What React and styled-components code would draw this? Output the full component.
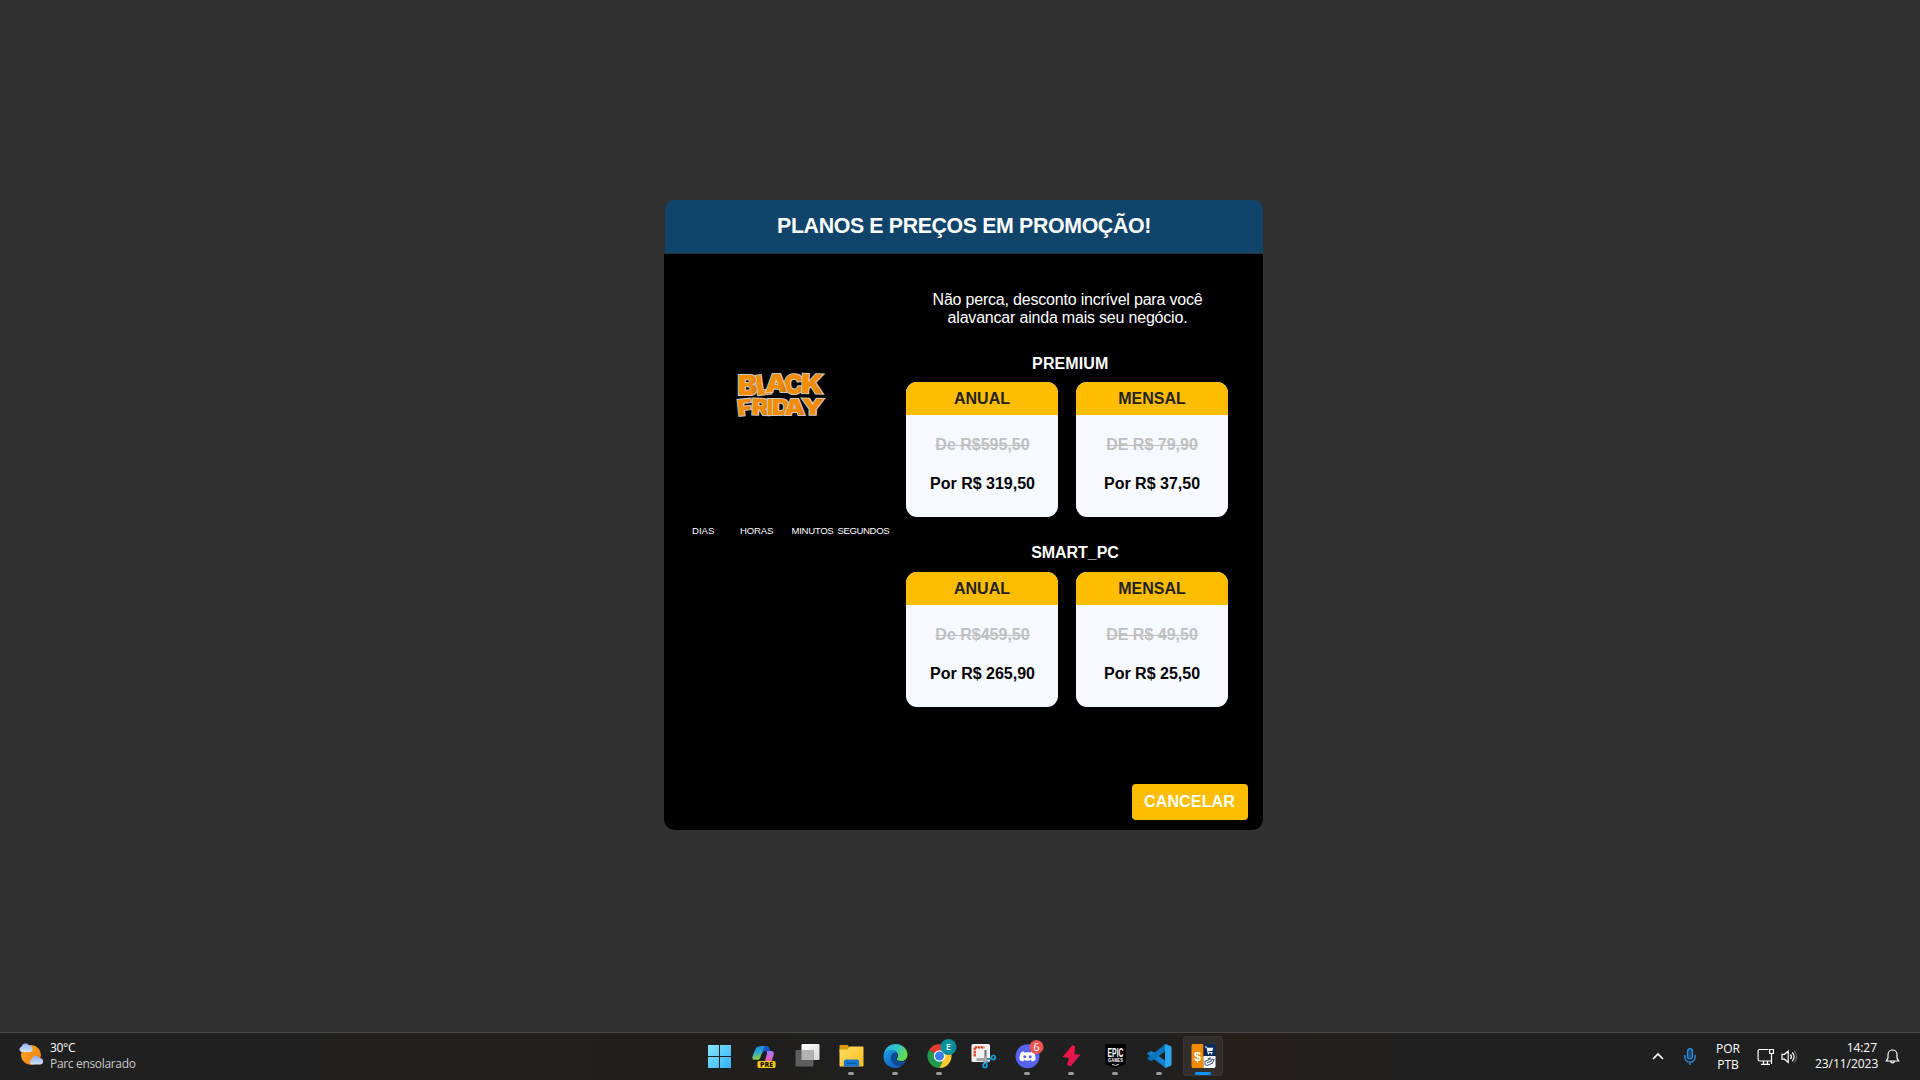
import React from "react";
import styled, { createGlobalStyle } from "styled-components";

const GlobalStyle = createGlobalStyle`
  html, body { margin: 0; padding: 0; background: #313131; }
  * { box-sizing: border-box; }
`;

const Screen = styled.div`
  width: 1920px;
  height: 1080px;
  display: flex;
  flex-direction: column;
  overflow: hidden;
  background: #313131;
  font-family: "Liberation Sans", Arial, sans-serif;
`;

const Desktop = styled.main`
  height: 1032px;
  padding: 200px 0 0 664px;
`;

/* ---------- dialog ---------- */

const Dialog = styled.section`
  width: 599px;
  height: 630px;
  display: flex;
  flex-direction: column;
`;

const DialogHeader = styled.header`
  height: 53px;
  margin: 0 0 1px 1px;
  padding-top: 14px;
  border-radius: 9px 9px 0 0;
  background: #10446b;
  color: #fff;
  font-weight: bold;
  font-size: 21.33px;
  line-height: 24px;
  letter-spacing: -0.36px;
  text-align: center;
`;

const DialogBody = styled.div`
  flex: 1;
  display: flex;
  flex-direction: column;
  border-radius: 0 0 11px 11px;
  background: #000;
`;

const Columns = styled.div`
  height: 530px;
  display: flex;
`;

const PromoColumn = styled.aside`
  width: 242px;
  padding: 117px 0 0 28px;
`;

const Logo = styled.svg`
  display: block;
  margin-left: 42px;
  overflow: visible;
`;

const Countdown = styled.div`
  width: 197.5px;
  margin-top: 106px;
  display: flex;
  color: #fff;
  font-size: 9.6px;
  line-height: 12px;
  overflow: hidden;
  white-space: nowrap;
`;

const Unit = styled.span`
  flex: 0 0 ${(p) => p.$w}px;
  letter-spacing: ${(p) => p.$ls || 0}px;
`;

const PlansColumn = styled.div`
  width: 322px;
  padding-top: 37px;
`;

const Lead = styled.p`
  margin: 0 0 28px;
  padding-left: 1px;
  color: #fff;
  font-size: 16px;
  line-height: 18px;
  letter-spacing: -0.2px;
  text-align: center;
`;

const Plan = styled.section`
  margin-bottom: 27px;
`;

const PlanName = styled.h2`
  margin: 0 0 ${(p) => p.$gap}px;
  padding-left: ${(p) => p.$shift}px;
  color: #fff;
  font-size: 16px;
  line-height: 18px;
  letter-spacing: ${(p) => p.$ls}px;
  text-align: center;
`;

const CardRow = styled.div`
  display: flex;
  gap: 18px;
`;

const Card = styled.article`
  width: 152px;
  height: 135px;
  border-radius: 11px;
  overflow: hidden;
  background: #f6f9ff;
  font-weight: bold;
  font-size: 16px;
  line-height: 18px;
  text-align: center;
`;

const CardHeader = styled.div`
  height: 33px;
  padding-top: 8px;
  background: #ffbd00;
  color: #222;
`;

const OldPrice = styled.div`
  margin-top: 21px;
  padding-left: ${(p) => p.$nudge}px;
  color: #c0c0c0;
  text-decoration: line-through;
  text-decoration-thickness: 1px;
`;

const NewPrice = styled.div`
  margin-top: 21px;
  padding-left: ${(p) => p.$nudge}px;
  color: #000;
`;

const Footer = styled.footer`
  display: flex;
  justify-content: flex-end;
  padding-right: 15px;
`;

const CancelButton = styled.button`
  width: 116px;
  height: 36px;
  padding: 0 1px 0 0;
  border: 0;
  border-radius: 4px;
  background: #ffbd00;
  color: #fff;
  font: bold 16px/18px "Liberation Sans", Arial, sans-serif;
  letter-spacing: 0.15px;
`;

/* ---------- taskbar ---------- */

const Taskbar = styled.footer`
  height: 48px;
  display: flex;
  border-top: 1px solid #484848;
  background: linear-gradient(90deg, #202020 0, #202020 260px, #221f1c 480px, #201f1e 760px, #202020 1000px, #202020 1150px, #251f19 1240px, #202020 1420px, #202020 100%);
  color: #fff;
  font-family: "Open Sans", "Noto Sans", sans-serif;
  font-size: 12px;
  line-height: 16px;
`;

const Weather = styled.div`
  width: 697px;
  padding-left: 18px;
  display: flex;
`;

const WeatherIcon = styled.svg`
  margin-top: 9px;
`;

const WeatherText = styled.div`
  margin: 7px 0 0 5px;
  letter-spacing: -0.3px;
`;

const Muted = styled.div`
  color: #c8c8c8;
  letter-spacing: -0.33px;
`;

const Apps = styled.nav`
  display: flex;
  width: 528px;
`;

const AppSlot = styled.div`
  width: 44px;
  height: 47px;
  padding-top: 3px;
  display: flex;
  justify-content: center;
`;

const AppTile = styled.div`
  width: 40px;
  height: 40px;
  display: flex;
  flex-direction: column;
  align-items: center;
  border-radius: 4px;
  background: ${(p) => (p.$active ? "#312e2b" : "transparent")};
  box-shadow: ${(p) => (p.$active ? "inset 0 0 0 1px #393633" : "none")};
`;

const AppIcon = styled.svg`
  flex: none;
  margin-top: 4px;
  overflow: visible;
`;

const Indicator = styled.span`
  width: ${(p) => (p.$active ? 16 : 6)}px;
  height: 3px;
  border-radius: 2px;
  background: ${(p) => (p.$active ? "#0a93f5" : "#9a9a9a")};
`;

const Tray = styled.div`
  flex: 1;
  display: flex;
  justify-content: flex-end;
  padding-right: 20px;
`;

const TrayIcon = styled.svg`
  flex: none;
  margin-top: 15px;
  margin-right: ${(p) => p.$gap}px;
`;

const TrayText = styled.div`
  flex: none;
  width: ${(p) => p.$w}px;
  margin-top: ${(p) => p.$top}px;
  margin-right: ${(p) => p.$gap}px;
  text-align: ${(p) => p.$align};
  letter-spacing: ${(p) => p.$ls || 0}px;
  white-space: nowrap;
`;

/* ---------- content ---------- */

const plans = [
  {
    name: "PREMIUM",
    shift: 6.5,
    ls: 0.1,
    gap: 9,
    offers: [
      { period: "ANUAL", from: "De R$595,50", to: "Por R$ 319,50", nudge: 1 },
      { period: "MENSAL", from: "DE R$ 79,90", to: "Por R$ 37,50", nudge: 0 },
    ],
  },
  {
    name: "SMART_PC",
    shift: 16,
    ls: -0.05,
    gap: 10,
    offers: [
      { period: "ANUAL", from: "De R$459,50", to: "Por R$ 265,90", nudge: 1 },
      { period: "MENSAL", from: "DE R$ 49,50", to: "Por R$ 25,50", nudge: 0 },
    ],
  },
];

// letter, x, baseline, width, font size, rotation
const logoLetters = [
  ["C", 50, 22.8, 20, 26.5, -4],
  ["L", 21.5, 23.5, 15.5, 27, -8],
  ["A", 31.5, 20.8, 22, 25, 0],
  ["B", 3.5, 24, 20, 27.5, 0],
  ["K", 67, 22.5, 22.5, 26.5, 2],
  ["F", 3.5, 44.4, 14.5, 22, -6],
  ["R", 17.5, 43.8, 18, 22, 2],
  ["I", 33, 43.8, 7, 22, 0],
  ["D", 38, 43.8, 18, 22, 0],
  ["A", 50.5, 43.8, 20.5, 22, 0],
  ["Y", 67.5, 43.8, 22.5, 22, 1],
];

function BlackFriday() {
  return (
    <Logo width="90" height="48" viewBox="0 0 90 48">
      <defs>
        <linearGradient id="bf" x1="0" x2="1" y1="0" y2="0.2">
          <stop offset="0" stopColor="#f59000" />
          <stop offset="0.75" stopColor="#f28b00" />
          <stop offset="1" stopColor="#d67c08" />
        </linearGradient>
      </defs>
      {logoLetters.map(([ch, x, y, w, s, r], i) => (
        <text
          key={i}
          x={x}
          y={y}
          textLength={w}
          lengthAdjust="spacingAndGlyphs"
          transform={`rotate(${r} ${x + w / 2} ${y - 8})`}
          fontFamily="Inter, Lato, sans-serif"
          fontWeight="900"
          fontSize={s}
          fill="url(#bf)"
          stroke="#cfc8c0"
          strokeWidth="2"
          strokeLinejoin="miter"
          paintOrder="stroke"
        >
          {ch}
        </text>
      ))}
    </Logo>
  );
}

const icons = {
  windows: (
    <>
      <defs>
        <linearGradient id="win" x1="0" y1="0" x2="1" y2="1">
          <stop offset="0" stopColor="#8ae4ff" />
          <stop offset="1" stopColor="#2fb2fb" />
        </linearGradient>
      </defs>
      <path fill="url(#win)" d="M1 1h11v11H1zM13 1h11v11H13zM1 13h11v11H1zM13 13h11v11H13z" />
    </>
  ),
  copilot: (
    <>
      <defs>
        <linearGradient id="cp1" x1="0" y1="0" x2="0.2" y2="1">
          <stop offset="0" stopColor="#1b7fe0" />
          <stop offset="0.5" stopColor="#2aa9cf" />
          <stop offset="1" stopColor="#8ecb3a" />
        </linearGradient>
        <linearGradient id="cp2" x1="0" y1="0" x2="0" y2="1">
          <stop offset="0" stopColor="#9c7bff" />
          <stop offset="0.55" stopColor="#e25fc0" />
          <stop offset="1" stopColor="#f58a55" />
        </linearGradient>
      </defs>
      <g transform="translate(1 1)">
        <path fill="#1b55c4" d="M9 1h5.500c2 0 2.500 1 3 3l.7 2h-4c-2 0-3 1-3.600 3z" />
        <path fill="url(#cp1)" d="M9.500 1h4.500c-1.500 0-2.200 1-2.700 3L8.300 12.500c-.5 1.800-1.300 2.300-3 2.300H2.500C.4 14.800 0 13.200.6 11L3.500 4C4.500 1.800 6.500 1 9.500 1z" />
        <path fill="url(#cp2)" d="M14.500 6h4.500c2.500 0 3.300 1.700 2.600 4L19 18c-.8 2.500-2 3-5 3H9c2 0 2.800-1 3.400-3l2.500-9c.3-1.300.2-2.500-.4-3z" />
      </g>
      <rect x="6.500" y="17" width="18" height="7" rx="1.500" fill="#ffca0a" />
      <text x="9" y="23" fontFamily="Open Sans, sans-serif" fontWeight="800" fontSize="7" fill="#171200" textLength="13" lengthAdjust="spacingAndGlyphs">PRE</text>
    </>
  ),
  taskview: (
    <>
      <defs>
        <linearGradient id="tv" x1="0" y1="0" x2="1" y2="1">
          <stop offset="0" stopColor="#ffffff" />
          <stop offset="1" stopColor="#d8d8d8" />
        </linearGradient>
      </defs>
      <rect x="6.500" y="0" width="18" height="16" rx="1" fill="url(#tv)" />
      <rect x="0.500" y="6" width="18" height="16.500" rx="1" fill="#5e5e5e" />
      <rect x="6.500" y="6" width="12" height="10" fill="#b2b2b2" />
    </>
  ),
  explorer: (
    <>
      <defs>
        <linearGradient id="fo" x1="0" y1="0" x2="1" y2="1">
          <stop offset="0" stopColor="#ffdc63" />
          <stop offset="1" stopColor="#ffc022" />
        </linearGradient>
      </defs>
      <path fill="#d99b0c" d="M1.500 1h7l2.500 2.500V8H.5V2c0-.6.400-1 1-1z" />
      <path fill="url(#fo)" d="M.5 5.500h8l2.500-3h12.500c.7 0 1 .4 1 1v18c0 .6-.4 1-1 1h-22c-.6 0-1-.4-1-1z" />
      <path fill="#1779ce" d="M4.800 22.500V18c0-1.600.8-2.500 2.400-2.500h10.600c1.600 0 2.400.9 2.400 2.500v4.500z" />
      <path fill="#0c59a6" d="M8.500 18.500h8c.6 0 1 .3 1 1v.5h-10v-.5c0-.7.400-1 1-1z" />
    </>
  ),
  edge: (
    <>
      <defs>
        <linearGradient id="ed1" x1="0" y1="0" x2="1" y2="0.4">
          <stop offset="0" stopColor="#2aa8e8" />
          <stop offset="0.55" stopColor="#2fc3c8" />
          <stop offset="1" stopColor="#62dc4f" />
        </linearGradient>
        <linearGradient id="ed2" x1="0" y1="0" x2="0.8" y2="1">
          <stop offset="0" stopColor="#1aa0e0" />
          <stop offset="1" stopColor="#1158b8" />
        </linearGradient>
      </defs>
      <path fill="url(#ed1)" d="M.6 11C1.400 4.600 6.400 0 12.500 0c7 0 12 5 12 10.700 0 4-3 6.300-6.300 6.300-3 0-4.500-1-4.500-2 0-.8 1.300-1.300 1.300-3.400 0-2.500-2.500-5-6.300-5C4.800 6.600 1.800 8.500.6 11z" />
      <path fill="url(#ed2)" d="M.5 12c.2-3.600 3.800-6 7.700-6 3.300 0 5 1.300 6 2.700-3-.6-6 1.500-6 5.300 0 5 4.800 8.300 9.800 7.300.3 0 .7.200.4.600-1.500 1.300-3.700 2.100-6 2.100C5.500 24 .2 19 .5 12z" />
      <path fill="#0e4a9c" d="M8.200 14c0-3.300 2.200-5.300 5-5.400.8.800 1.200 1.900 1.200 3-.3 1.800-1.300 2-1.200 3.300.2 1.600 2 2.700 5 2.700 1.800 0 3.200-.5 4.300-1.200.4-.2.700.1.500.5-1.200 2.700-3.400 4.700-6.300 4.900-4.700.4-8.500-3.300-8.500-7.800z" />
    </>
  ),
  chrome: (
    <>
      <path fill="#e33b2e" d="M12.500 12L2.100 6A12 12 0 0 1 22.900 6z" />
      <path fill="#fcc934" d="M12.500 12L22.900 6A12 12 0 0 1 12.500 24l-1-4z" />
      <path fill="#219a4f" d="M12.500 12l3 6-3 6A12 12 0 0 1 2.100 6z" />
      <path fill="#e33b2e" d="M12.500 6h10.400L20 3 12.500 2 4 5l3.300 4z" />
      <circle cx="12.500" cy="12" r="5.800" fill="#fff" />
      <circle cx="12.500" cy="12" r="4.500" fill="#3b7ded" />
      <circle cx="21.500" cy="3" r="8" fill="#058e9c" />
      <text x="21.500" y="6.300" fontFamily="Open Sans, sans-serif" fontSize="9.500" fontWeight="600" fill="#dff" textAnchor="middle">E</text>
    </>
  ),
  snip: (
    <>
      <rect x="0.500" y="0" width="18.500" height="18" rx="1.500" fill="#f1f1f1" />
      <path fill="none" stroke="#dd3b1b" strokeWidth="2.200" strokeDasharray="2.500 0.600" d="M3.700 12.500V3.300h9.800" />
      <path fill="none" stroke="#767b80" strokeWidth="2.200" d="M14.500 6v12M6 15h13" />
      <path fill="#a5a9ad" d="M5.500 14h8l2-4v8l-2 2-2-3h-6z" />
      <circle cx="22.300" cy="13.500" r="2" fill="none" stroke="#199bd7" strokeWidth="1.700" />
      <circle cx="14" cy="21.500" r="2" fill="none" stroke="#199bd7" strokeWidth="1.700" />
      <path stroke="#199bd7" strokeWidth="1.500" d="M17.500 15.500l3.200-1.500M15.500 19.500l1.500-2.500" />
    </>
  ),
  discord: (
    <>
      <circle cx="12.500" cy="12.300" r="12" fill="#5663ee" />
      <path fill="#fff" d="M8.500 7.500c-1.500.3-2.300.8-2.300.8C4.800 10.700 4.400 13 4.500 15.800c1.200 1 2.600 1.500 3.600 1.600l.8-1.300c2.300.7 5 .7 7.200 0l.8 1.300c1-.1 2.400-.6 3.600-1.600.1-2.800-.3-5.100-1.700-7.500 0 0-.8-.5-2.300-.8l-.6 1c-2.200-.4-4.600-.4-6.800 0z" />
      <circle cx="9.800" cy="12.800" r="1.500" fill="#5663ee" />
      <circle cx="15.200" cy="12.800" r="1.500" fill="#5663ee" />
      <circle cx="21.500" cy="3" r="7" fill="#ef5350" />
      <text x="21.500" y="7" fontFamily="Open Sans, sans-serif" fontSize="11" fill="#fff" textAnchor="middle">6</text>
    </>
  ),
  bolt: (
    <>
      <defs>
        <linearGradient id="bo" x1="0" y1="0" x2="1" y2="1">
          <stop offset="0" stopColor="#ff1637" />
          <stop offset="1" stopColor="#c9175a" />
        </linearGradient>
      </defs>
      <path fill="url(#bo)" d="M13.500 1l2.500 1.500-.5 7.500 6 .8L11.500 22.500l-3.500-2 2-6.500-6.500-1z" />
    </>
  ),
  epic: (
    <>
      <path fill="#020202" d="M3.500 0h18c1 0 1.500.5 1.500 1.500V20l-10.500 4L2 20V1.500C2 .5 2.500 0 3.500 0z" />
      <text x="4.500" y="12.500" fontFamily="Liberation Sans Narrow, Liberation Sans, sans-serif" fontWeight="bold" fontSize="13" fill="#fff" textLength="16" lengthAdjust="spacingAndGlyphs">EPIC</text>
      <text x="5" y="17.500" fontFamily="Liberation Sans, sans-serif" fontWeight="bold" fontSize="4.500" fill="#fff" textLength="15" lengthAdjust="spacingAndGlyphs">GAMES</text>
      <path stroke="#d8d8d8" fill="none" strokeWidth="1" d="M9 20.200l3.500 1.300 3.500-1.300" />
    </>
  ),
  vscode: (
    <>
      <path fill="#1585d0" d="M18.500 24L3.500 9.500 1.800 8 .4 9.200c-.3.300-.2.700 0 .9z" />
      <path fill="#1585d0" d="M18.500 24v-7L8.500 9.500 4.500 7 1.800 8z" />
      <path fill="#0a74bd" d="M18.500.5L3.500 14.500 1.800 16 .4 14.800c-.3-.3-.2-.7 0-.9L18.500 0z" />
      <path fill="#0a74bd" d="M18.500 0v7L8.500 14.500 4.500 17 1.800 16z" />
      <path fill="#2aa5f2" d="M18.500 0l5.200 2.300c.5.200.8.600.8 1.200v17c0 .6-.3 1-.8 1.200L18.500 24c-.4.100-.5-.2-.5-.6V.6c0-.4.100-.7.500-.6z" />
    </>
  ),
  store: (
    <>
      <path fill="#f28b00" d="M2.500 0h10v24h-10c-1.400 0-2-.6-2-2V2c0-1.400.6-2 2-2z" />
      <path fill="#0a2b5c" d="M12.500 0h10c1.400 0 2 .6 2 2v10h-12z" />
      <path fill="#fff" d="M12.500 12h12v10c0 1.400-.6 2-2 2h-10z" />
      <text x="6.700" y="16.700" fontFamily="Liberation Sans, sans-serif" fontWeight="bold" fontSize="13" fill="#fff" textAnchor="middle">$</text>
      <path fill="#fff" d="M14 2.500h1.800l.5 1.200h6L21.300 7h-4l.2 1h4v.9h-4.800l-1.200-5.300H14z" />
      <circle cx="17.500" cy="9.700" r=".8" fill="#fff" />
      <circle cx="20.600" cy="9.700" r=".8" fill="#fff" />
      <path fill="none" stroke="#4d6385" strokeWidth="1.100" d="M14 17.500l5-2.500 4 .5-1.500 3.500-5 2.500-2.500-.8zM16 19l5-2.500M17 14.800l3-1" />
    </>
  ),
};

const apps = [
  { id: "windows" },
  { id: "copilot" },
  { id: "taskview" },
  { id: "explorer", open: true },
  { id: "edge", open: true },
  { id: "chrome", open: true },
  { id: "snip" },
  { id: "discord", open: true },
  { id: "bolt", open: true },
  { id: "epic", open: true },
  { id: "vscode", open: true },
  { id: "store", open: true, active: true },
];

function SunAndClouds() {
  return (
    <WeatherIcon width="27" height="26" viewBox="0 0 27 26">
      <defs>
        <linearGradient id="sun" x1="0" y1="0" x2="1" y2="1">
          <stop offset="0" stopColor="#fbb02b" />
          <stop offset="1" stopColor="#f0730c" />
        </linearGradient>
        <linearGradient id="cloud" x1="0" y1="0" x2="0" y2="1">
          <stop offset="0" stopColor="#8fb0ee" />
          <stop offset="1" stopColor="#d5e2fb" />
        </linearGradient>
      </defs>
      <circle cx="13" cy="13" r="10" fill="url(#sun)" />
      <path fill="url(#cloud)" d="M3.800 10a2.700 2.700 0 0 1-.3-5.300A4 4 0 0 1 11 3.500a3.300 3.300 0 0 1 1 6.500z" />
      <path fill="url(#cloud)" d="M14 22.500a2.700 2.700 0 0 1-.3-5.300 4 4 0 0 1 7.500-1.200 3.300 3.300 0 0 1 1.300 6.500z" />
    </WeatherIcon>
  );
}

export default function App() {
  return (
    <>
      <GlobalStyle />
      <Screen>
        <Desktop>
          <Dialog>
            <DialogHeader>PLANOS E PREÇOS EM PROMOÇÃO!</DialogHeader>
            <DialogBody>
              <Columns>
                <PromoColumn>
                  <BlackFriday />
                  <Countdown>
                    <Unit $w={48}>DIAS</Unit>
                    <Unit $w={51.5} $ls={-0.2}>HORAS</Unit>
                    <Unit $w={46} $ls={-0.3}>MINUTOS</Unit>
                    <Unit $w={54} $ls={-0.4}>SEGUNDOS</Unit>
                  </Countdown>
                </PromoColumn>
                <PlansColumn>
                  <Lead>
                    Não perca, desconto incrível para você
                    <br />
                    alavancar ainda mais seu negócio.
                  </Lead>
                  {plans.map((plan) => (
                    <Plan key={plan.name}>
                      <PlanName $shift={plan.shift} $ls={plan.ls} $gap={plan.gap}>
                        {plan.name}
                      </PlanName>
                      <CardRow>
                        {plan.offers.map((o) => (
                          <Card key={o.period}>
                            <CardHeader>{o.period}</CardHeader>
                            <OldPrice $nudge={o.nudge}>{o.from}</OldPrice>
                            <NewPrice $nudge={o.nudge}>{o.to}</NewPrice>
                          </Card>
                        ))}
                      </CardRow>
                    </Plan>
                  ))}
                </PlansColumn>
              </Columns>
              <Footer>
                <CancelButton>CANCELAR</CancelButton>
              </Footer>
            </DialogBody>
          </Dialog>
        </Desktop>
        <Taskbar>
          <Weather>
            <SunAndClouds />
            <WeatherText>
              <div>30°C</div>
              <Muted>Parc ensolarado</Muted>
            </WeatherText>
          </Weather>
          <Apps>
            {apps.map((a) => (
              <AppSlot key={a.id}>
                <AppTile $active={a.active}>
                  <AppIcon width="25" height="32" viewBox="0 -4 25 32">
                    {icons[a.id]}
                  </AppIcon>
                  {a.open && <Indicator $active={a.active} />}
                </AppTile>
              </AppSlot>
            ))}
          </Apps>
          <Tray>
            <TrayIcon $gap={20} width="12" height="18" viewBox="0 0 12 18" fill="none" stroke="#fff" strokeWidth="1.600">
              <path d="M1 11l5-5 5 5" />
            </TrayIcon>
            <TrayIcon $gap={18} width="12" height="18" viewBox="0 0 12 18" fill="none" stroke="#2b8fe0" strokeWidth="1.300">
              <rect x="3.500" y="0.700" width="5" height="10" rx="2.500" fill="#164a78" />
              <path d="M.8 7v2a5.200 5.200 0 0 0 10.400 0V7M6 14v3" />
            </TrayIcon>
            <TrayText $w={28} $top={8} $gap={15} $align="center">
              POR
              <br />
              PTB
            </TrayText>
            <TrayIcon $gap={6} width="18" height="18" viewBox="0 0 18 18" fill="none" stroke="#fff" strokeWidth="1.200">
              <path d="M11.500 1.500H2.500c-.8 0-1.400.6-1.400 1.400v8.700c0 .8.600 1.400 1.400 1.400h12M4 16.400h9M6.500 13v3M10.500 13v3M12.600 1.500h3.800v4h-3.800zM14.500 5.500V16" />
            </TrayIcon>
            <TrayIcon $gap={17} width="17" height="18" viewBox="0 0 17 18" fill="none" stroke="#fff" strokeWidth="1.200">
              <path d="M1 6.300h2.500L7.200 3v11.500l-3.700-3.300H1zM9.500 6.500a3.500 3.500 0 0 1 0 4.500M11.300 4.500a6 6 0 0 1 0 8.500" />
              <path stroke="#6a6a6a" d="M13.200 2.700a9 9 0 0 1 0 12" />
            </TrayIcon>
            <TrayText $w={62} $top={7} $gap={8} $align="right" $ls={-0.05}>
              14:27
              <br />
              23/11/2023
            </TrayText>
            <TrayIcon $gap={0} width="15" height="18" viewBox="0 0 15 18" fill="none" stroke="#fff" strokeWidth="1.200">
              <path d="M3 6.500a4.500 4.500 0 0 1 9 0v3.500l1.700 3H1.300L3 10zM5.600 13.500a2 2 0 0 0 3.800 0" />
            </TrayIcon>
          </Tray>
        </Taskbar>
      </Screen>
    </>
  );
}
